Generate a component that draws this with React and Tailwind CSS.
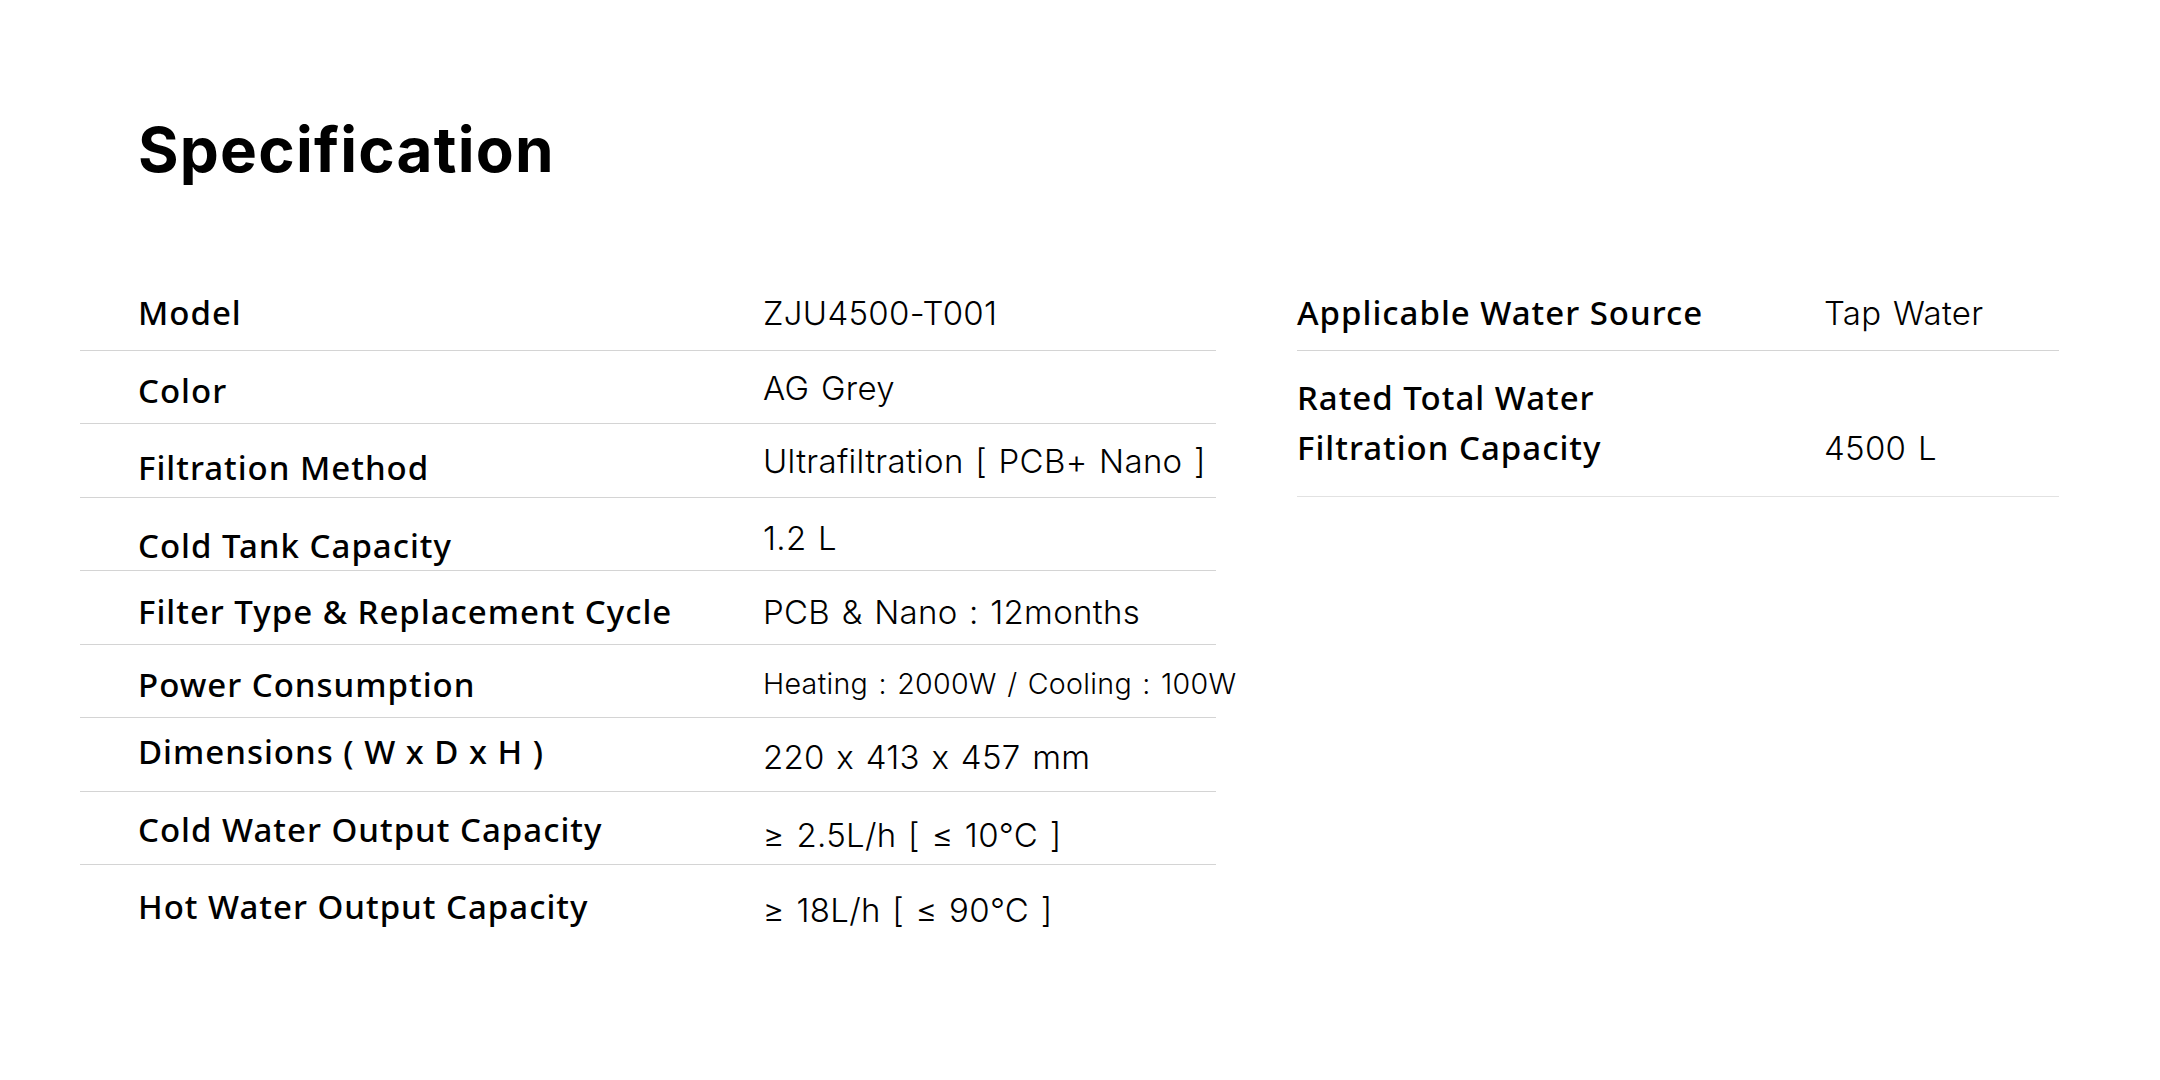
const LEFT_SPECS = [
  { label: "Model", value: "ZJU4500-T001" },
  { label: "Color", value: "AG Grey", lo: "pt-[8px]", vo: "pt-[2px]" },
  { label: "Filtration Method", value: "Ultrafiltration [ PCB+ Nano ]", lo: "pt-[16px]", vo: "pt-[2px]" },
  { label: "Cold Tank Capacity", value: "1.2 L", lo: "pt-[24px]", vo: "pt-[8px]" },
  { label: "Filter Type & Replacement Cycle", value: "PCB & Nano : 12months", lo: "pt-[10px]", vo: "pt-[10px]" },
  {
    label: "Power Consumption",
    value: "Heating : 2000W / Cooling : 100W",
    small: true,
    lo: "pt-[8px]",
    vo: "pt-[6px]",
  },
  { label: "Dimensions ( W x D x H )", value: "220 x 413 x 457 mm", lo: "pb-[4px]", vo: "pt-[6px]" },
  { label: "Cold Water Output Capacity", value: "≥ 2.5L/h [ ≤ 10°C ]", lo: "pt-[4px]", vo: "pt-[14px]" },
  { label: "Hot Water Output Capacity", value: "≥ 18L/h [ ≤ 90°C ]", lo: "pt-[10px]", vo: "pt-[16px]" },
];

const labelCls =
  "font-['Noto_Sans',sans-serif] text-[33px] font-medium tracking-[1px] text-black leading-[50px]";
const valueCls =
  "font-['Inter',sans-serif] font-light text-black leading-[50px] whitespace-nowrap tracking-[0.3px] [word-spacing:2px] [font-feature-settings:'calt'_0]";

function SpecRow({ label, value, small, lo = "", vo = "", last }) {
  return (
    <div
      className={`flex h-[73.5px] items-center pl-[58px] ${
        last ? "" : "border-b border-[#d4d4d4]"
      }`}
    >
      <div className={`w-[625px] shrink-0 ${labelCls} ${lo}`}>{label}</div>
      <div className={`${valueCls} ${small ? "text-[28.6px]" : "text-[33px]"} ${vo}`}>{value}</div>
    </div>
  );
}

export default function App() {
  return (
    <div className="min-h-[1080px] w-[2160px] bg-white pl-[80px] pr-[101px] pt-[119px]">
      <h1 className="pl-[58px] font-['Inter',sans-serif] text-[62px] font-bold leading-none tracking-[1.2px] text-black">
        Specification
      </h1>

      <div className="mt-[96px] flex gap-[81px]">
        <div className="w-[1136px] shrink-0">
          {LEFT_SPECS.map((s, i) => (
            <SpecRow key={s.label} {...s} last={i === LEFT_SPECS.length - 1} />
          ))}
        </div>

        <div className="flex-1">
          <div className="flex h-[73.5px] items-center border-b border-[#d4d4d4]">
            <div className={`w-[527px] shrink-0 ${labelCls}`}>Applicable Water Source</div>
            <div className={`${valueCls} text-[33px]`}>Tap Water</div>
          </div>
          <div className="flex h-[146.6px] items-center border-b border-[#e2e2e2]">
            <div className={`w-[527px] shrink-0 ${labelCls}`}>
              Rated Total Water
              <br />
              Filtration Capacity
            </div>
            <div className={`${valueCls} text-[33px] self-end pb-[23px]`}>4500 L</div>
          </div>
        </div>
      </div>
    </div>
  );
}
